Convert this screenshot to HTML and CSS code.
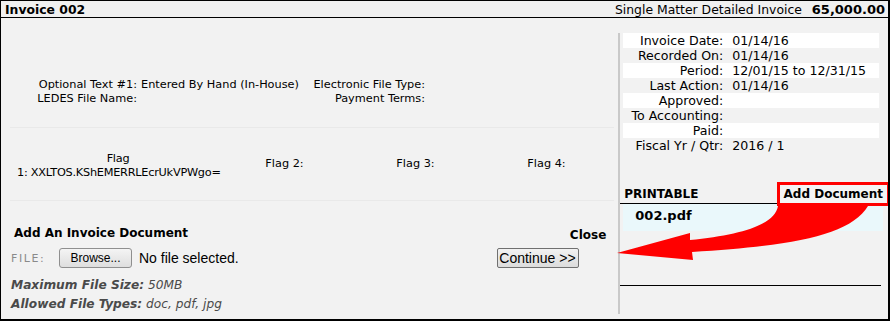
FILE: index.html
```html
<!DOCTYPE html>
<html lang="en">
<head>
    <meta charset="UTF-8">
    <title>Invoice 002</title>
    <link rel="stylesheet" href="styles.css">
</head>
<body>
    <div class="frame">
        <div class="head">
            <span class="inv-no">Invoice 002</span>
            <span class="inv-type">Single Matter Detailed Invoice <b class="amount">65,000.00</b></span>
        </div>

        <div class="main">
            <div class="left">
                <div class="opt-block">
                    <div class="opt-grid">
                        <span class="lbl">Optional Text #1:</span>
                        <span>Entered By Hand (In-House)</span>
                        <span class="lbl">Electronic File Type:</span>
                        <span></span>
                        <span class="lbl">LEDES File Name:</span>
                        <span></span>
                        <span class="lbl">Payment Terms:</span>
                        <span></span>
                    </div>
                </div>

                <div class="flags">
                    <div class="flag">Flag 1:&nbsp;XXLTOS.KShEMERRLEcrUkVPWgo=</div>
                    <div class="flag">Flag 2:</div>
                    <div class="flag">Flag 3:</div>
                    <div class="flag">Flag 4:</div>
                </div>

                <div class="upload">
                    <div class="upload-head">
                        <span class="upload-title">Add An Invoice Document</span>
                        <span class="close">Close</span>
                    </div>
                    <div class="file-row">
                        <span class="file-lbl">FILE:</span>
                        <span class="browse">Browse...</span>
                        <span class="file-none">No file selected.</span>
                        <span class="continue">Continue &gt;&gt;</span>
                    </div>
                    <p class="note"><b>Maximum File Size:</b> 50MB</p>
                    <p class="note"><b>Allowed File Types:</b> doc, pdf, jpg</p>
                </div>
            </div>

            <div class="right">
                <table class="dates">
                    <tr><td class="d-lbl">Invoice Date:</td><td>01/14/16</td></tr>
                    <tr><td class="d-lbl">Recorded On:</td><td>01/14/16</td></tr>
                    <tr><td class="d-lbl">Period:</td><td>12/01/15 to 12/31/15</td></tr>
                    <tr><td class="d-lbl">Last Action:</td><td>01/14/16</td></tr>
                    <tr><td class="d-lbl">Approved:</td><td></td></tr>
                    <tr><td class="d-lbl">To Accounting:</td><td></td></tr>
                    <tr><td class="d-lbl">Paid:</td><td></td></tr>
                    <tr><td class="d-lbl">Fiscal Yr / Qtr:</td><td>2016 / 1</td></tr>
                </table>

                <div class="docs">
                    <div class="docs-head">
                        <span class="printable">PRINTABLE</span>
                        <span class="add-doc">Add Document</span>
                    </div>
                    <div class="doc-row">002.pdf</div>
                    <div class="docs-end"></div>
                </div>
            </div>
        </div>

        <!-- red callout arrow -->
        <svg class="arrow" width="890" height="321" viewBox="0 0 890 321">
            <path d="M617 253 L690 233 L690 240 C740 235 775 225 778 206 L868 206 C850 236 790 246 692 252 L693 260 Z" fill="#ff0000"/>
        </svg>
    </div>
</body>
</html>
```

FILE: styles.css
```css
body {
    margin: 0;
    padding: 0;
    font-family: "DejaVu Sans", Verdana, sans-serif;
    color: #000;
}

.frame {
    position: relative;
    width: 890px;
    height: 321px;
    box-sizing: border-box;
    border: 1px solid #000;
    border-right-width: 2px;
    border-bottom-width: 2px;
    background-color: #f2f2f2;
    overflow: hidden;
}

.head {
    display: flex;
    justify-content: space-between;
    align-items: center;
    height: 16px;
    padding: 0 3px 0 4px;
    border-bottom: 1px solid #000;
    background-color: #f0f0f0;
    font-size: 12.4px;
}

.inv-no {
    font-weight: bold;
}

.amount {
    margin-left: 6px;
    font-size: 13px;
}

.main {
    display: flex;
}

.left {
    width: 618px;
}

/* optional text block */
.opt-block {
    height: 49px;
    padding-top: 60px;
    margin: 0 4px 0 9px;
    border-bottom: 1px solid #e9e9e9;
}

.opt-grid {
    display: grid;
    grid-template-columns: 110px 160px 120px 1fr;
    column-gap: 4px;
    padding-left: 17px;
    font-size: 11.3px;
    line-height: 14px;
    white-space: nowrap;
}

.lbl {
    text-align: right;
}

/* flags */
.flags {
    display: grid;
    grid-template-columns: 202px 131px 131px 131px;
    align-items: center;
    height: 72px;
    margin: 0 4px 0 9px;
    padding-left: 7px;
    border-bottom: 1px solid #e9e9e9;
    font-size: 11.3px;
    line-height: 14px;
    text-align: center;
}

.flag:first-child {
    padding-top: 3px;
    letter-spacing: -0.25px;
}

/* upload form */
.upload {
    padding: 25px 12px 0 10px;
}

.upload-head {
    display: flex;
    justify-content: space-between;
    padding-left: 3px;
    font-size: 12px;
    font-weight: bold;
    line-height: 14px;
}

.close {
    margin-top: 2px;
}

.file-row {
    display: flex;
    align-items: center;
    margin-top: 6px;
    height: 20px;
    font-family: "Liberation Sans", Arial, sans-serif;
}

.file-lbl {
    width: 48px;
    color: #8a8a8a;
    font-family: "DejaVu Sans", Verdana, sans-serif;
    font-size: 11px;
    letter-spacing: 1.6px;
}

.browse {
    box-sizing: border-box;
    width: 73px;
    height: 20px;
    line-height: 18px;
    text-align: center;
    font-size: 12px;
    border: 1px solid #8f8f8f;
    border-radius: 3px;
    background: linear-gradient(to bottom, #f4f4f4, #dedede);
}

.file-none {
    margin-left: 7px;
    font-size: 14px;
}

.continue {
    box-sizing: border-box;
    width: 82px;
    height: 20px;
    line-height: 18px;
    margin-left: auto;
    margin-right: 27px;
    padding-left: 1px;
    font-size: 14px;
    border: 1px solid #707070;
    border-radius: 2px;
    background: linear-gradient(to bottom, #f2f2f2, #dcdcdc);
}

.note {
    margin: 0;
    font-size: 12.2px;
    font-style: italic;
    line-height: 19px;
    color: #4a4a4a;
}

.note:first-of-type {
    margin-top: 8px;
}

/* right panel */
.right {
    width: 268px;
    height: 281px;
    margin-top: 15px;
    border-left: 2px solid #c9c9c9;
}

.dates {
    border-collapse: collapse;
    width: 256px;
    margin-left: 3px;
    font-size: 12.6px;
}

.dates td {
    height: 15px;
    padding: 0;
    line-height: 15px;
    white-space: nowrap;
}

.dates tr:nth-child(odd) {
    background-color: #fff;
}

.dates .d-lbl {
    width: 100px;
    padding-right: 9px;
    text-align: right;
}

.docs {
    margin-top: 29px;
    margin-right: 7px;
}

.docs-head {
    display: flex;
    justify-content: space-between;
    align-items: flex-start;
    height: 21px;
    border-bottom: 1px solid #000;
    font-size: 12px;
    font-weight: bold;
}

.printable {
    margin: 5px 0 0 4px;
}

.add-doc {
    position: relative;
    z-index: 1;
    box-sizing: border-box;
    height: 24px;
    margin-right: -9px;
    padding: 2px 4px 0 4px;
    border: 3px solid #ff0000;
    background-color: #f4f4f4;
}

.doc-row {
    height: 27px;
    margin-left: 3px;
    margin-right: -2px;
    padding-left: 12px;
    line-height: 24px;
    font-size: 13px;
    font-weight: bold;
    background-color: #eaf8fb;
}

.docs-end {
    height: 54px;
    border-bottom: 1px solid #000;
}

.arrow {
    position: absolute;
    top: -1px;
    left: -1px;
    pointer-events: none;
}
```
